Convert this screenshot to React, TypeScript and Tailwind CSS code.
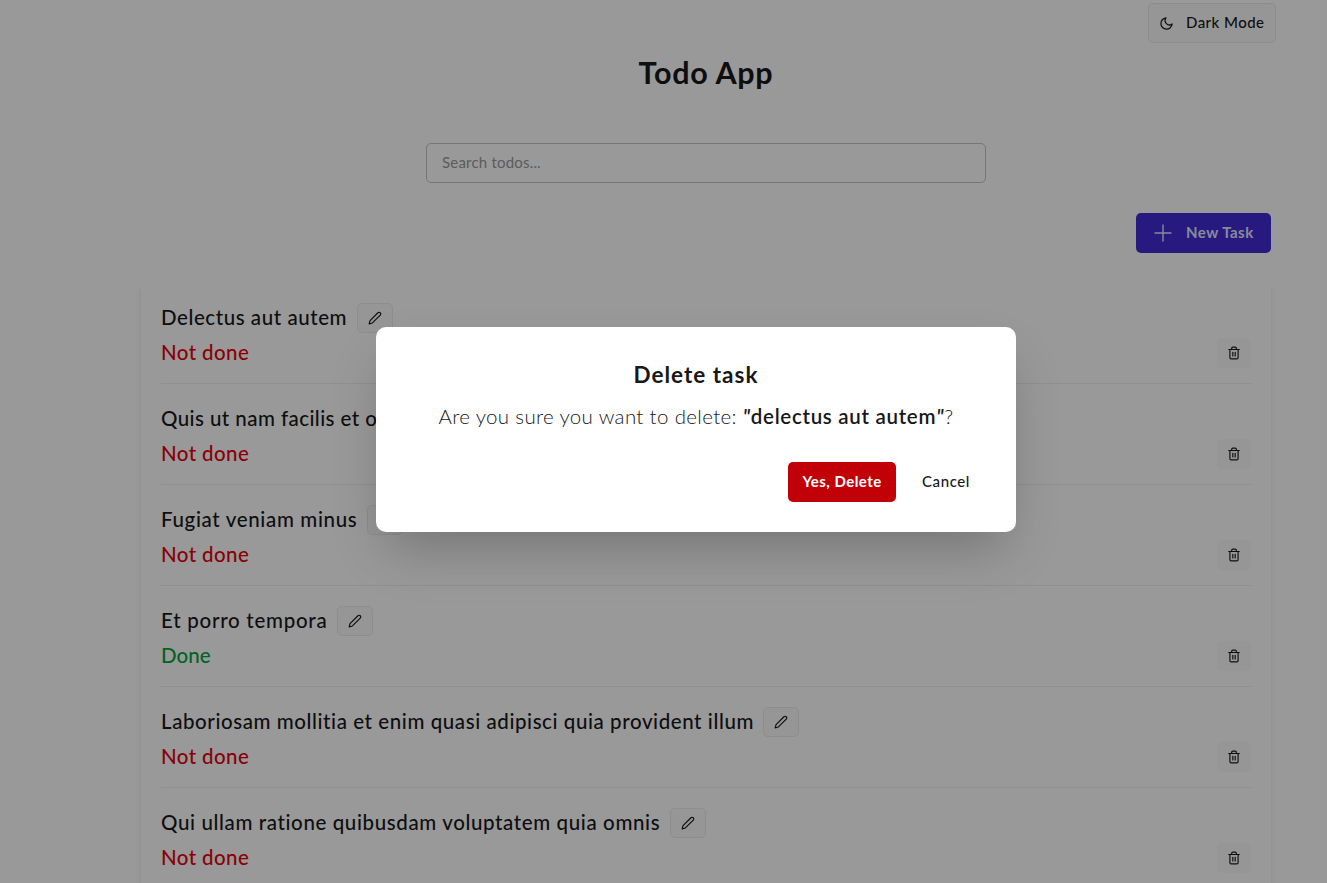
import { FiEdit2, FiMoon, FiTrash2 } from "react-icons/fi";
import { clsx } from "clsx";

type Todo = { title: string; done: boolean; tracking: string };

const todos: Todo[] = [
  { title: "Delectus aut autem", done: false, tracking: "tracking-[0.56px]" },
  { title: "Quis ut nam facilis et officia qui", done: false, tracking: "tracking-[0.43px]" },
  { title: "Fugiat veniam minus", done: false, tracking: "tracking-[0.65px]" },
  { title: "Et porro tempora", done: true, tracking: "tracking-[0.74px]" },
  {
    title: "Laboriosam mollitia et enim quasi adipisci quia provident illum",
    done: false,
    tracking: "tracking-[0.58px]",
  },
  {
    title: "Qui ullam ratione quibusdam voluptatem quia omnis",
    done: false,
    tracking: "tracking-[0.62px]",
  },
];

function PlusIcon() {
  return (
    <svg width="18" height="18" viewBox="0 0 18 18" fill="none" stroke="currentColor" strokeWidth="1.4">
      <path d="M9 1v16M1 9h16" strokeLinecap="round" />
    </svg>
  );
}

function TodoRow({ todo }: { todo: Todo }) {
  return (
    <li className="h-[101px] shrink-0 border-b border-[#eeeeef] pt-5">
      <div className="flex h-[30px] items-center gap-[9.5px]">
        <h2 className={clsx("pb-[2px] text-[20.5px] leading-7 font-medium whitespace-nowrap", todo.tracking)}>
          {todo.title}
        </h2>
        <button className="flex h-[30px] w-[36px] items-center justify-center rounded-[5px] border border-[#ececed] bg-[#fafafa]">
          <FiEdit2 size={14} />
        </button>
      </div>
      <div className="mt-1 flex h-8 items-center justify-between">
        <span
          className={clsx(
            "pb-[2px] text-[20.5px] leading-7 font-medium",
            todo.done ? "tracking-[0.05px] text-[#00a63e]" : "tracking-[0.4px] text-[#e7000b]",
          )}
        >
          {todo.done ? "Done" : "Not done"}
        </span>
        <button className="flex h-[30px] w-[34px] items-center justify-center rounded-[5px] bg-[#fafafa]">
          <FiTrash2 size={14} />
        </button>
      </div>
    </li>
  );
}

function DeleteDialog() {
  return (
    <div className="absolute inset-0 bg-black/40 pt-[327px] pl-[376px]">
      <div
        role="dialog"
        className="flex h-[205px] w-[640px] flex-col rounded-[10px] bg-white px-[30px] pt-[33px] shadow-[0_25px_50px_-12px_rgba(0,0,0,0.25)]"
      >
        <h3 className="text-center text-[22.5px] leading-[30px] font-bold tracking-[1px]">Delete task</h3>
        <p className="mt-[11px] text-center text-[20.5px] leading-[30px] font-light tracking-[0.34px] whitespace-nowrap">
          Are you sure you want to delete:{" "}
          <strong className="font-semibold tracking-[0.7px]">
            <span className="italic">"</span>delectus aut autem<span className="italic">"</span>
          </strong>
          ?
        </p>
        <div className="mt-[31px] flex justify-end gap-[10px]">
          <button className="h-10 w-[108px] rounded-[5px] bg-[#c10007] pb-[2px] text-[15px] font-bold tracking-[0.45px] text-white">
            Yes, Delete
          </button>
          <button className="h-10 w-[80px] pb-[2px] text-[15px] font-medium tracking-[0.6px]">Cancel</button>
        </div>
      </div>
    </div>
  );
}

export default function App() {
  return (
    <div className="relative h-[883px] w-[1327px] overflow-hidden bg-white font-['Lato',sans-serif] text-[#18181b]">
      <main className="flex flex-col pl-[141px]">
        <div className="flex justify-end pt-[3px] pr-[51px]">
          <button className="flex h-10 w-[128px] items-center rounded-[5px] border border-[#ececed] bg-[#fafafa] pl-[10px] text-[15px] font-medium tracking-[0.45px]">
            <FiMoon size={15} className="mr-3" />
            <span className="pb-[2px]">Dark Mode</span>
          </button>
        </div>
        <h1 className="mt-[9px] w-[1130px] text-center text-[30.5px] leading-10 font-bold tracking-[0.7px]">
          Todo App
        </h1>
        <div className="mt-[51px] flex w-[1130px] justify-center">
          <input
            placeholder="Search todos..."
            className="h-10 w-[560px] rounded-[5px] border border-[#c5c5c6] bg-white px-[15px] pb-[2px] text-[15px] tracking-[0.2px] placeholder:text-[#98989b]"
          />
        </div>
        <div className="mt-[30px] flex w-[1130px] justify-end">
          <button className="flex h-10 w-[135px] items-center rounded-[5px] bg-[#422ad5] pl-[18px] text-[15px] font-bold tracking-[0.5px] text-[#e0e7ff]">
            <span className="mr-[14px]">
              <PlusIcon />
            </span>
            <span className="pb-[2px]">New Task</span>
          </button>
        </div>
        <ul className="mt-[30px] flex h-[700px] w-[1130px] flex-col px-5 shadow-[0_4px_6px_-1px_rgba(0,0,0,0.1),0_2px_4px_-2px_rgba(0,0,0,0.1)]">
          {todos.map((todo) => (
            <TodoRow key={todo.title} todo={todo} />
          ))}
        </ul>
      </main>
      <DeleteDialog />
    </div>
  );
}
